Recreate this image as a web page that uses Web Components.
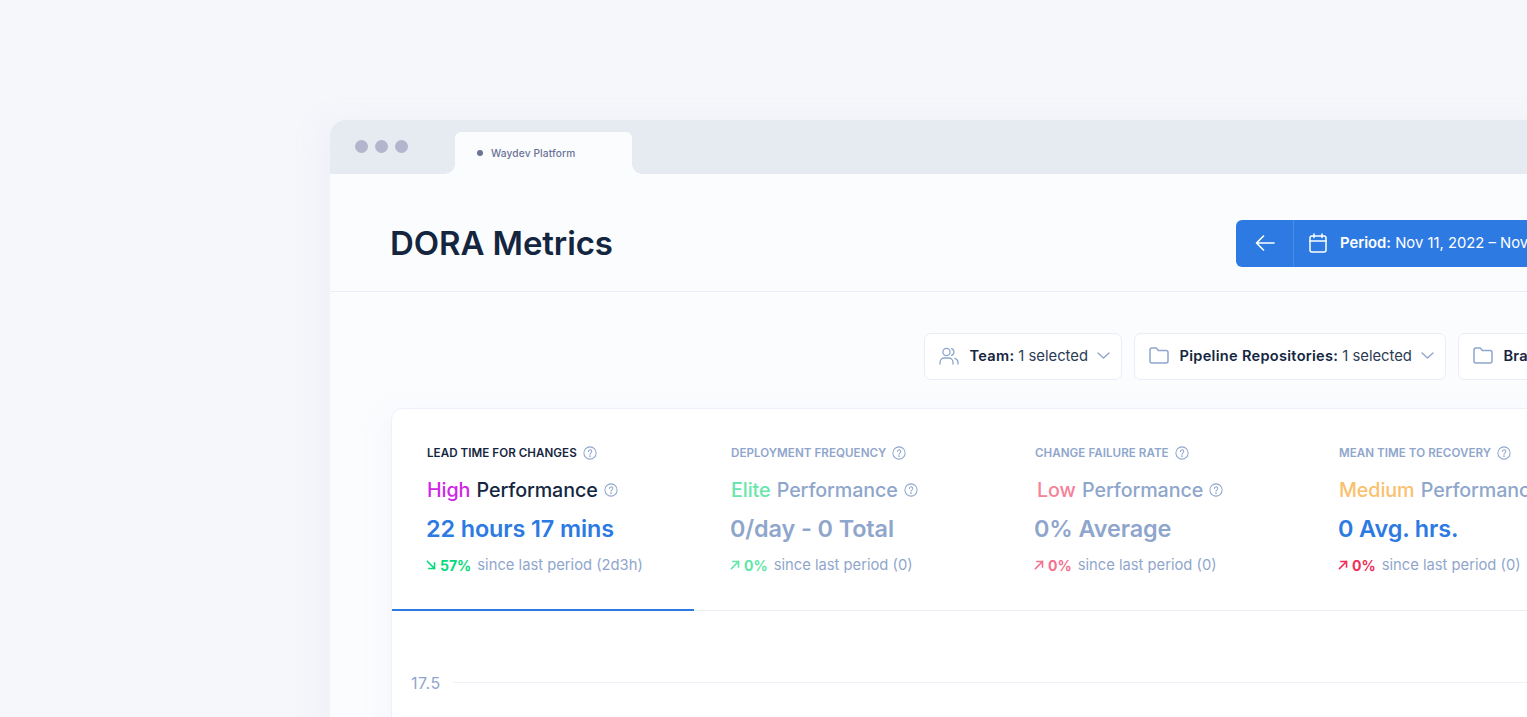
<!doctype html>
<html lang="en"><head><meta charset="utf-8"><title>DORA Metrics</title>
<style>
html,body{margin:0;height:100%;overflow:hidden}
body{background:#f6f7fb;font-family:Inter,"Liberation Sans",sans-serif;color:#14263f}
</style></head>
<body>
<app-stage>
  <browser-window tab="Waydev Platform">
    <page-header title="DORA Metrics"></page-header>
    <filter-bar>
      <filter-chip icon="team" label="Team:" value="1 selected"></filter-chip>
      <filter-chip icon="folder" label="Pipeline Repositories:" value="1 selected"></filter-chip>
      <filter-chip icon="folder" label="Branches:" value="1 selected"></filter-chip>
    </filter-bar>
    <metrics-card>
      <metric-tab active w="302" pad="35" title="LEAD TIME FOR CHANGES" level="High" level-color="#d026e6" value="22 hours 17 mins" value-color="#2d7ae3" dir="down" delta="57%" delta-color="#05d97c" since="since last period (2d3h)"></metric-tab>
      <metric-tab w="304" pad="37" title="DEPLOYMENT FREQUENCY" level="Elite" level-color="#67e6ac" value="0/day - 0 Total" dir="up" delta="0%" delta-color="#5fe6a8" since="since last period (0)"></metric-tab>
      <metric-tab w="305" pad="37" title="CHANGE FAILURE RATE" level="Low" level-color="#f5829a" indent="2" value="0% Average" dir="up" delta="0%" delta-color="#f5708e" since="since last period (0)"></metric-tab>
      <metric-tab w="303.5" pad="36" title="MEAN TIME TO RECOVERY" level="Medium" level-color="#fbc06e" value="0 Avg. hrs." value-color="#2d7ae3" dir="up" delta="0%" delta-color="#ee2f5a" since="since last period (0)"></metric-tab>
    </metrics-card>
  </browser-window>
</app-stage>
<script>
const I = {
  help: s => `<svg width="${s}" height="${s}" viewBox="0 0 16 16" fill="none" stroke="#8fa6cc" stroke-width="1.15" stroke-linecap="round"><circle cx="8" cy="8" r="7"/><path d="M6.2 6.3a1.9 1.9 0 1 1 2.9 1.6c-.7.4-1.1.8-1.1 1.6"/><circle cx="8" cy="11.6" r=".35" fill="#8fa6cc"/></svg>`,
  team: `<svg width="20" height="18" viewBox="0 0 20 18" fill="none" stroke="#8fa6cc" stroke-width="1.3" stroke-linecap="round" stroke-linejoin="round"><circle cx="7.5" cy="5" r="3.6"/><path d="M1 17v-1.6A4.4 4.4 0 0 1 5.4 11h4.2a4.4 4.4 0 0 1 4.4 4.4V17"/><path d="M12.5 1.6a3.6 3.6 0 0 1 0 6.8"/><path d="M15.8 11.3a4.4 4.4 0 0 1 3.2 4.1V17"/></svg>`,
  folder: `<svg width="20" height="17" viewBox="0 0 20 17" fill="none" stroke="#8fa6cc" stroke-width="1.5" stroke-linejoin="round"><path d="M1 3a2 2 0 0 1 2-2h4.2l2.2 2.6H17a2 2 0 0 1 2 2V14a2 2 0 0 1-2 2H3a2 2 0 0 1-2-2z"/></svg>`,
  chevron: `<svg width="13" height="7" viewBox="0 0 13 7" fill="none" stroke="#8fa6cc" stroke-width="1.4" stroke-linecap="round" stroke-linejoin="round"><path d="M1 1l5.5 5L12 1"/></svg>`,
  back: `<svg width="20" height="16" viewBox="0 0 20 16" fill="none" stroke="#fff" stroke-width="1.6" stroke-linecap="round" stroke-linejoin="round"><path d="M19 8H1.5M8.5 1L1.5 8l7 7"/></svg>`,
  cal: `<svg width="18" height="20" viewBox="0 0 18 20" fill="none" stroke="#fff" stroke-width="1.5" stroke-linecap="round" stroke-linejoin="round"><rect x="1" y="3" width="16" height="16" rx="2"/><path d="M1 8h16M5 1v3.4M13 1v3.4"/></svg>`,
  up: c => `<svg width="10" height="10" viewBox="0 0 10 10" fill="none" stroke="${c}" stroke-width="1.6" stroke-linecap="square"><path d="M1.5 8.5L8.5 1.5M3 1.5h5.5V7"/></svg>`,
  down: c => `<svg width="10" height="10" viewBox="0 0 10 10" fill="none" stroke="${c}" stroke-width="1.6" stroke-linecap="square"><path d="M1.5 1.5l7 7M3 8.5h5.5V3"/></svg>`
};
function def(name, render){
  customElements.define(name, class extends HTMLElement{
    constructor(){super();this.attachShadow({mode:'open'})}
    connectedCallback(){this.shadowRoot.innerHTML = render(this)}
  });
}
def('app-stage', () => `<style>:host{display:block;height:717px;box-sizing:border-box;padding:120px 0 0 330px;overflow:hidden}</style><slot></slot>`);
def('browser-window', el => `<style>
:host{display:block;width:1500px;height:900px;background:#fbfcfe;border-radius:16px 16px 0 0;box-shadow:-12px 0 30px rgba(150,165,200,.07)}
.bar{display:flex;height:54px;background:#e6eaf1;border-radius:16px 16px 0 0}
.dots{display:flex;gap:7px;padding:20px 0 0 25px;width:125px;box-sizing:border-box;flex:none}
.dots i{width:13px;height:13px;border-radius:50%;background:#b2b5cc}
.tab{position:relative;margin-top:12px;width:177px;background:#fbfcfe;border-radius:6px 6px 0 0;display:flex;align-items:center;gap:8px;padding:0 0 1px 22px;box-sizing:border-box;font-size:10.2px;font-weight:500;color:#6c7397;letter-spacing:.12px}
.tab b{width:6px;height:6px;border-radius:50%;background:#6c7397}
.tab::before,.tab::after{content:"";position:absolute;bottom:0;width:10px;height:10px}
.tab::before{left:-10px;background:radial-gradient(circle at 0 0,#e6eaf1 9.5px,#fbfcfe 10px)}
.tab::after{right:-10px;background:radial-gradient(circle at 100% 0,#e6eaf1 9.5px,#fbfcfe 10px)}
</style>
<div class="bar"><div class="dots"><i></i><i></i><i></i></div><div class="tab"><b></b><span>${el.getAttribute('tab')}</span></div></div><slot></slot>`);
def('page-header', el => `<style>
:host{display:flex;align-items:center;height:118px;box-sizing:border-box;border-bottom:1.5px solid #e9edf5;padding:20px 0 0 60px}
h1{margin:0;font-size:33px;font-weight:600;letter-spacing:-.1px;color:#14263f;width:846px;flex:none}
.btn{display:flex;height:47px;width:500px;background:#2d7ae3;border-radius:6px;color:#fff;font-size:14.8px;align-items:center;margin-top:1px}
.back{width:57px;height:100%;display:flex;align-items:center;justify-content:center;border-right:1px solid #4a8de8;box-sizing:content-box}
.per{display:flex;align-items:center;gap:13px;padding-left:15px;white-space:nowrap}
b{font-weight:600}
</style><h1>${el.getAttribute('title')}</h1>
<div class="btn"><div class="back">${I.back}</div><div class="per">${I.cal}<span><b>Period:</b> Nov 11, 2022 – Nov 18, 2022</span></div></div>`);
def('filter-bar', () => `<style>:host{display:flex;gap:12px;padding:41px 0 0 594px;height:116px;box-sizing:border-box;white-space:nowrap}</style><slot></slot>`);
def('filter-chip', el => `<style>
:host{display:flex;align-items:center;height:47px;box-sizing:border-box;background:#fff;border:1.5px solid #e8edf6;border-radius:7px;padding:0 11px 2px 14px;font-size:14.6px;color:#14263f;flex:none}
.ic{display:flex;margin-right:10.5px}
b{font-weight:600;letter-spacing:.28px}
.v{font-weight:400;font-size:14.8px;color:#2c3c55;margin-left:4px}
.ch{display:flex;margin-left:9px}
</style><span class="ic">${I[el.getAttribute('icon')]}</span><b>${el.getAttribute('label')}</b><span class="v">${el.getAttribute('value')}</span><span class="ch">${I.chevron}</span>`);
def('metrics-card', () => `<style>
:host{display:block;margin-left:61px;width:1400px;height:500px;background:#fff;border:1px solid #eef1f7;border-radius:12px;box-shadow:-8px 4px 24px rgba(150,165,200,.06)}
.tabs{display:flex;height:201px;border-bottom:1.5px solid #e9edf5;box-sizing:content-box}
.chart{display:flex;align-items:flex-start;gap:12px;padding:62px 0 0 19px;font-size:16px;color:#8fa6cc;letter-spacing:.5px}
.chart i{flex:1;border-top:1.5px solid #eef1f7;margin-top:9px}
</style><div class="tabs"><slot></slot></div><div class="chart"><span>17.5</span><i></i></div>`);
def('metric-tab', el => {
  const a = n => el.getAttribute(n);
  const on = el.hasAttribute('active');
  const muted = '#8fa6cc', dark = '#14263f';
  return `<style>
:host{display:block;flex:none;width:${a('w')}px;height:202px;box-sizing:border-box;padding:36px 0 0 ${a('pad')}px;white-space:nowrap;${on?'border-bottom:2px solid #2d7ae3;':''}}
div{display:flex;align-items:center}
.t{height:16px;gap:6px;font-size:11.6px;font-weight:600;letter-spacing:.05px;color:${on?dark:muted}}
.p{height:24px;margin-top:17px;margin-left:${a('indent')||0}px;gap:6px;font-size:19.7px;font-weight:500;letter-spacing:-.1px;word-spacing:1.2px;color:${on?dark:muted}}
.p em{font-style:normal;color:${a('level-color')}}
.v{height:28px;margin-top:12px;margin-left:-1px;font-size:23.4px;font-weight:600;letter-spacing:-.1px;color:${a('value-color')||muted}}
.d{height:20px;margin-top:13px;margin-left:-1px;font-size:14.75px;color:${muted}}
.d svg{margin-right:4px}
.d b{font-size:14px;font-weight:700;color:${a('delta-color')};margin-right:6px}
.t svg,.p svg{flex:none}
</style>
<div class="t"><span>${a('title')}</span>${I.help(14)}</div>
<div class="p"><span><em>${a('level')}</em> Performance</span>${I.help(14)}</div>
<div class="v">${a('value')}</div>
<div class="d">${I[a('dir')](a('delta-color'))}<b>${a('delta')}</b><span>${a('since')}</span></div>`;
});
</script>
</body></html>
